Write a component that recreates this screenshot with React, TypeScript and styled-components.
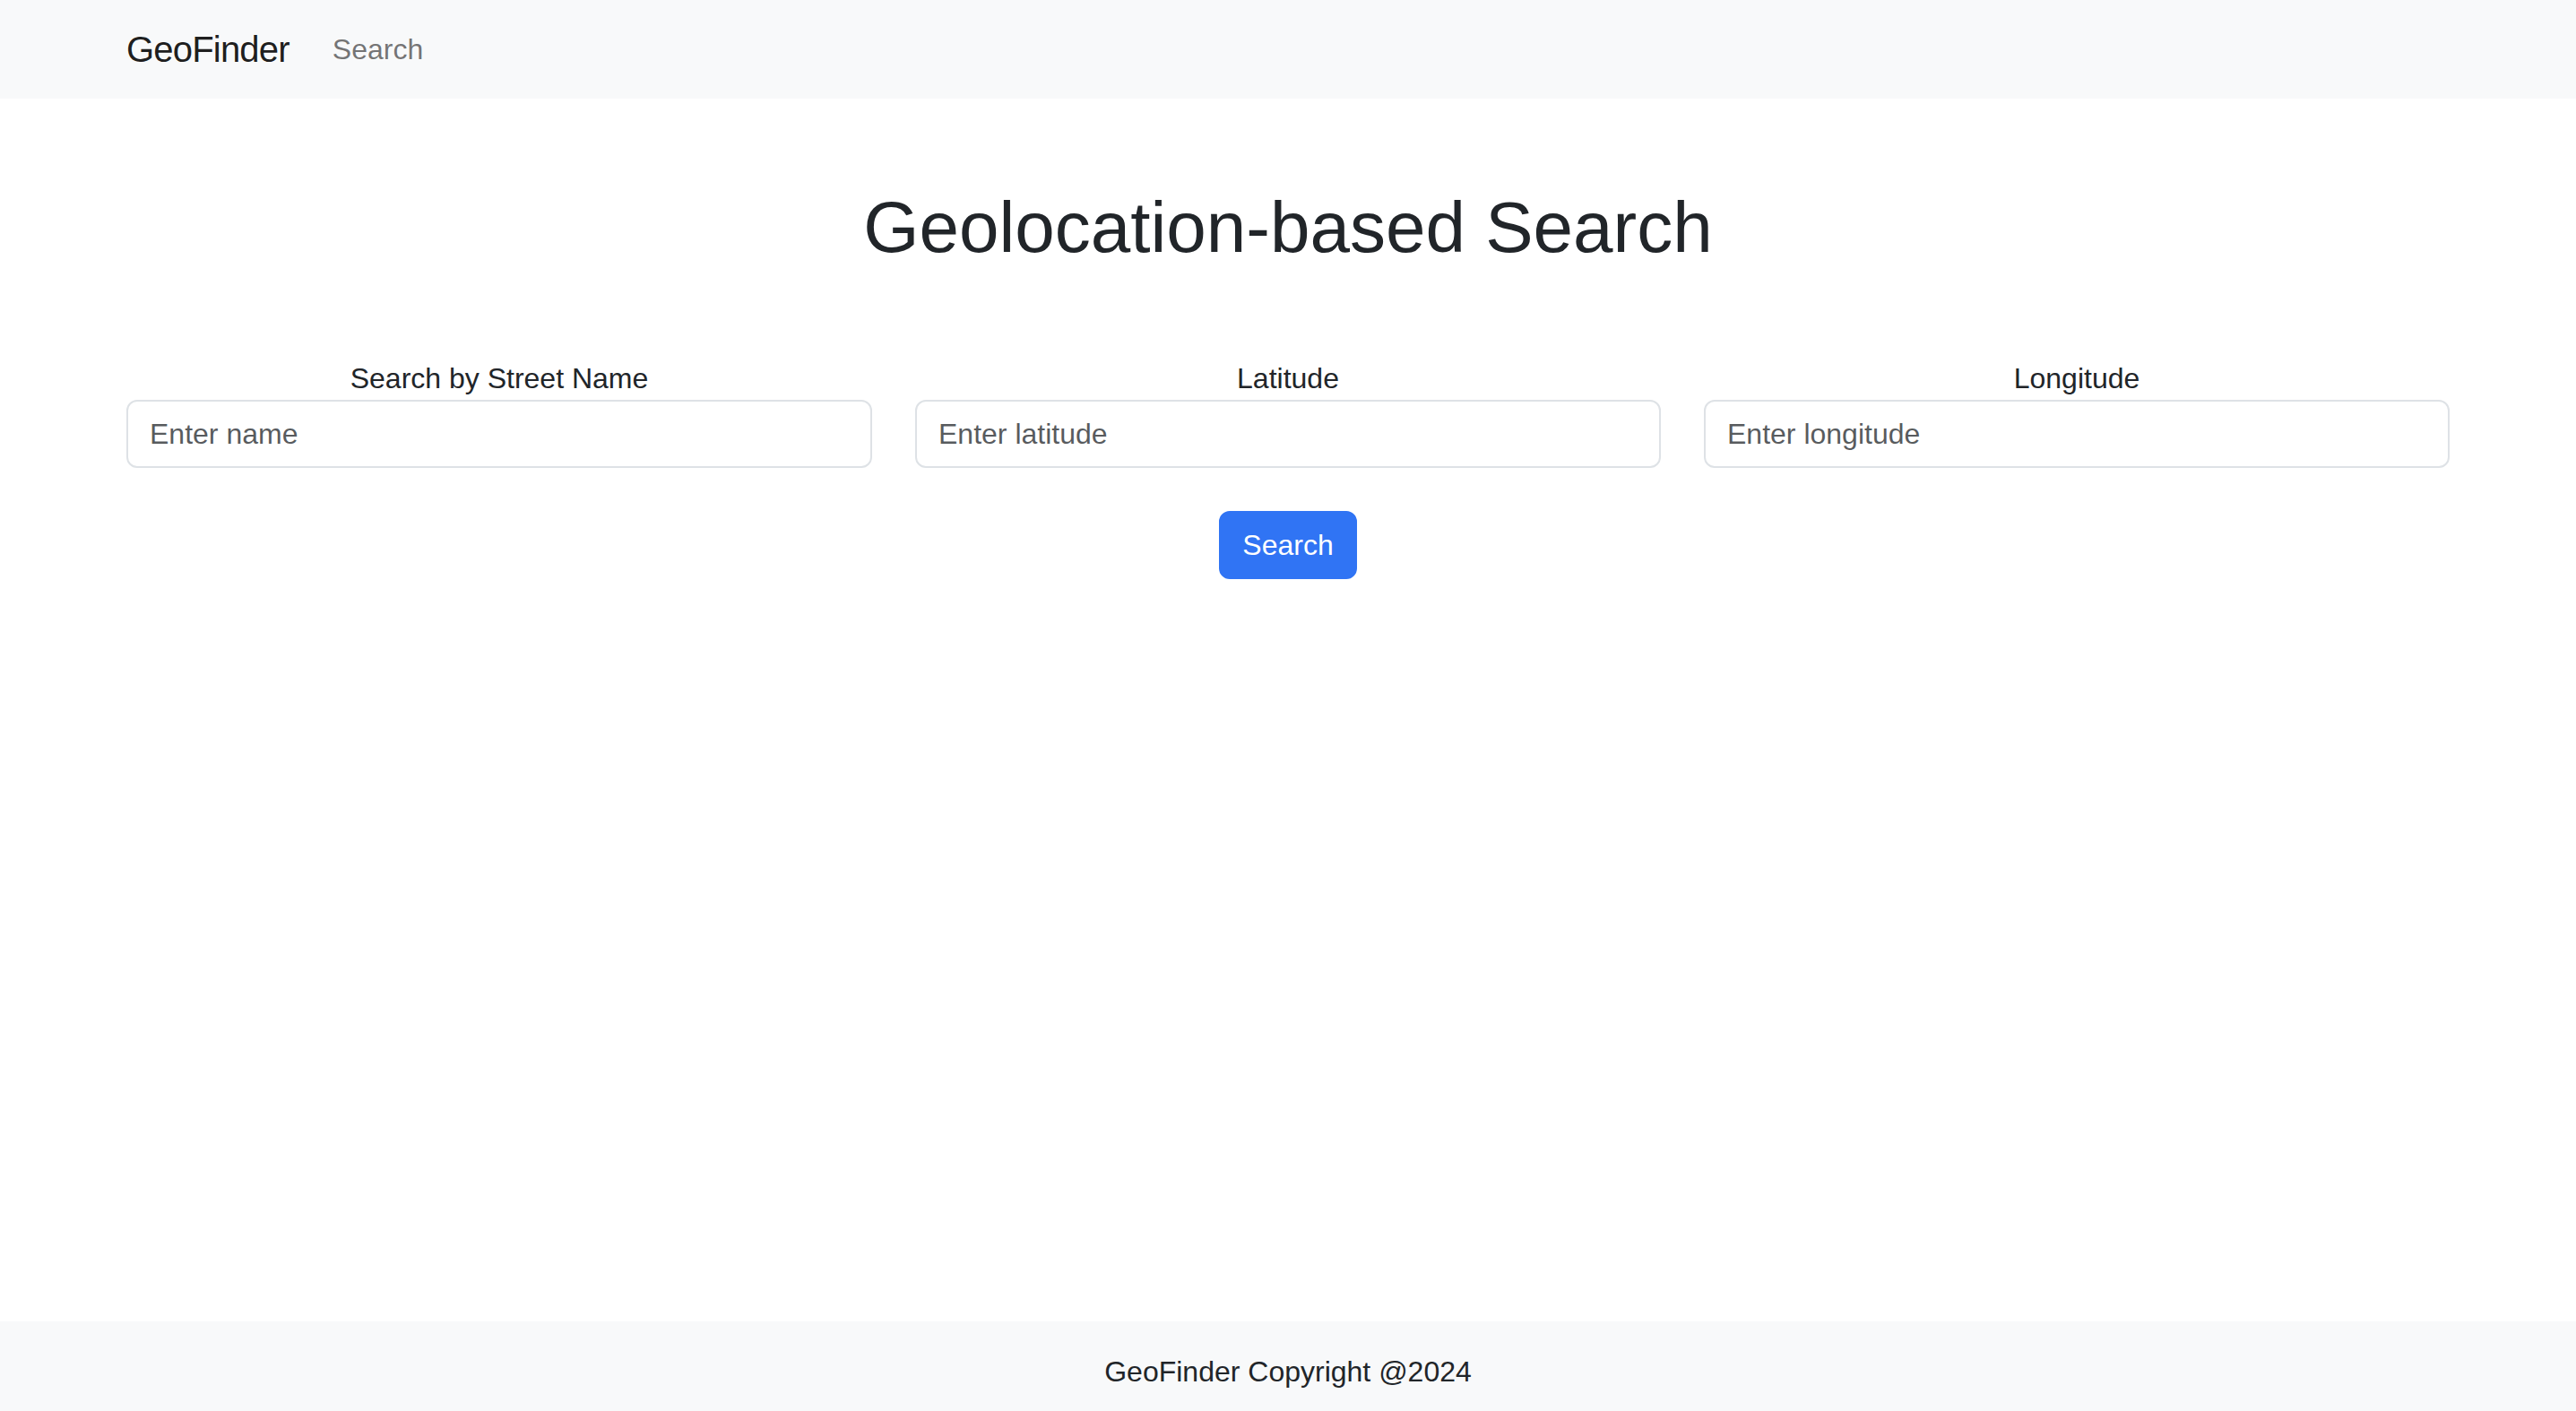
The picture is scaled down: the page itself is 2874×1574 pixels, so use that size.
import React from "react";
import styled, { createGlobalStyle } from "styled-components";

const GlobalStyle = createGlobalStyle`
  html, body {
    margin: 0;
    padding: 0;
    background: #ffffff;
  }
  body {
    font-family: "Liberation Sans", Arial, sans-serif;
    font-size: 32px;
    line-height: 1.5;
    color: #212529;
  }
  *, *::before, *::after { box-sizing: border-box; }
`;

const Page = styled.div`
  min-height: 100vh;
  display: flex;
  flex-direction: column;
`;

const Container = styled.div`
  width: 100%;
  max-width: 2640px;
  margin: 0 auto;
  padding: 0 24px;
`;

const NavBar = styled.nav`
  background: #f8f9fa;
  padding: 15px 0;
`;

const NavInner = styled(Container)`
  display: flex;
  align-items: center;
`;

const Brand = styled.a`
  font-size: 40px;
  line-height: 60px;
  letter-spacing: -0.8px;
  padding: 10px 0;
  margin-right: 32px;
  color: rgba(0, 0, 0, 0.9);
  text-decoration: none;
`;

const NavLink = styled.a`
  font-size: 32px;
  line-height: 48px;
  padding: 16px;
  color: rgba(0, 0, 0, 0.55);
  text-decoration: none;
`;

const Main = styled(Container)`
  flex: 1;
`;

const Title = styled.h1`
  margin: 96px 0;
  font-size: 80px;
  font-weight: 500;
  line-height: 1.2;
  text-align: center;
  color: #212529;
`;

const FieldRow = styled.div`
  display: grid;
  grid-template-columns: repeat(3, 1fr);
  gap: 48px;
`;

const Field = styled.div`
  display: flex;
  flex-direction: column;
`;

const Label = styled.label`
  display: block;
  text-align: center;
  font-size: 32px;
  line-height: 48px;
`;

const Input = styled.input`
  display: block;
  width: 100%;
  height: 76px;
  padding: 12px 24px;
  font-family: inherit;
  font-size: 32px;
  line-height: 48px;
  color: #212529;
  background: #fff;
  border: 2px solid #dee2e6;
  border-radius: 12px;
  outline: none;
  &::placeholder {
    color: rgba(33, 37, 41, 0.75);
  }
`;

const ButtonRow = styled.div`
  display: flex;
  justify-content: center;
  margin-top: 48px;
`;

const Button = styled.button`
  font-family: inherit;
  font-size: 32px;
  line-height: 48px;
  padding: 12px 24px;
  color: #fff;
  background: #3074f4;
  border: 2px solid #3074f4;
  border-radius: 12px;
  cursor: pointer;
`;

const Footer = styled.footer`
  background: #f8f9fa;
  height: 100px;
  padding-top: 32px;
  text-align: center;
  font-size: 32px;
  line-height: 48px;
  color: #212529;
`;

const fields = [
  { label: "Search by Street Name", placeholder: "Enter name" },
  { label: "Latitude", placeholder: "Enter latitude" },
  { label: "Longitude", placeholder: "Enter longitude" },
];

export default function App() {
  return (
    <>
      <GlobalStyle />
      <Page>
        <NavBar>
          <NavInner>
            <Brand href="#">GeoFinder</Brand>
            <NavLink href="#">Search</NavLink>
          </NavInner>
        </NavBar>
        <Main>
          <Title>Geolocation-based Search</Title>
          <FieldRow>
            {fields.map((f) => (
              <Field key={f.label}>
                <Label>{f.label}</Label>
                <Input type="text" placeholder={f.placeholder} />
              </Field>
            ))}
          </FieldRow>
          <ButtonRow>
            <Button type="button">Search</Button>
          </ButtonRow>
        </Main>
        <Footer>GeoFinder Copyright @2024</Footer>
      </Page>
    </>
  );
}
